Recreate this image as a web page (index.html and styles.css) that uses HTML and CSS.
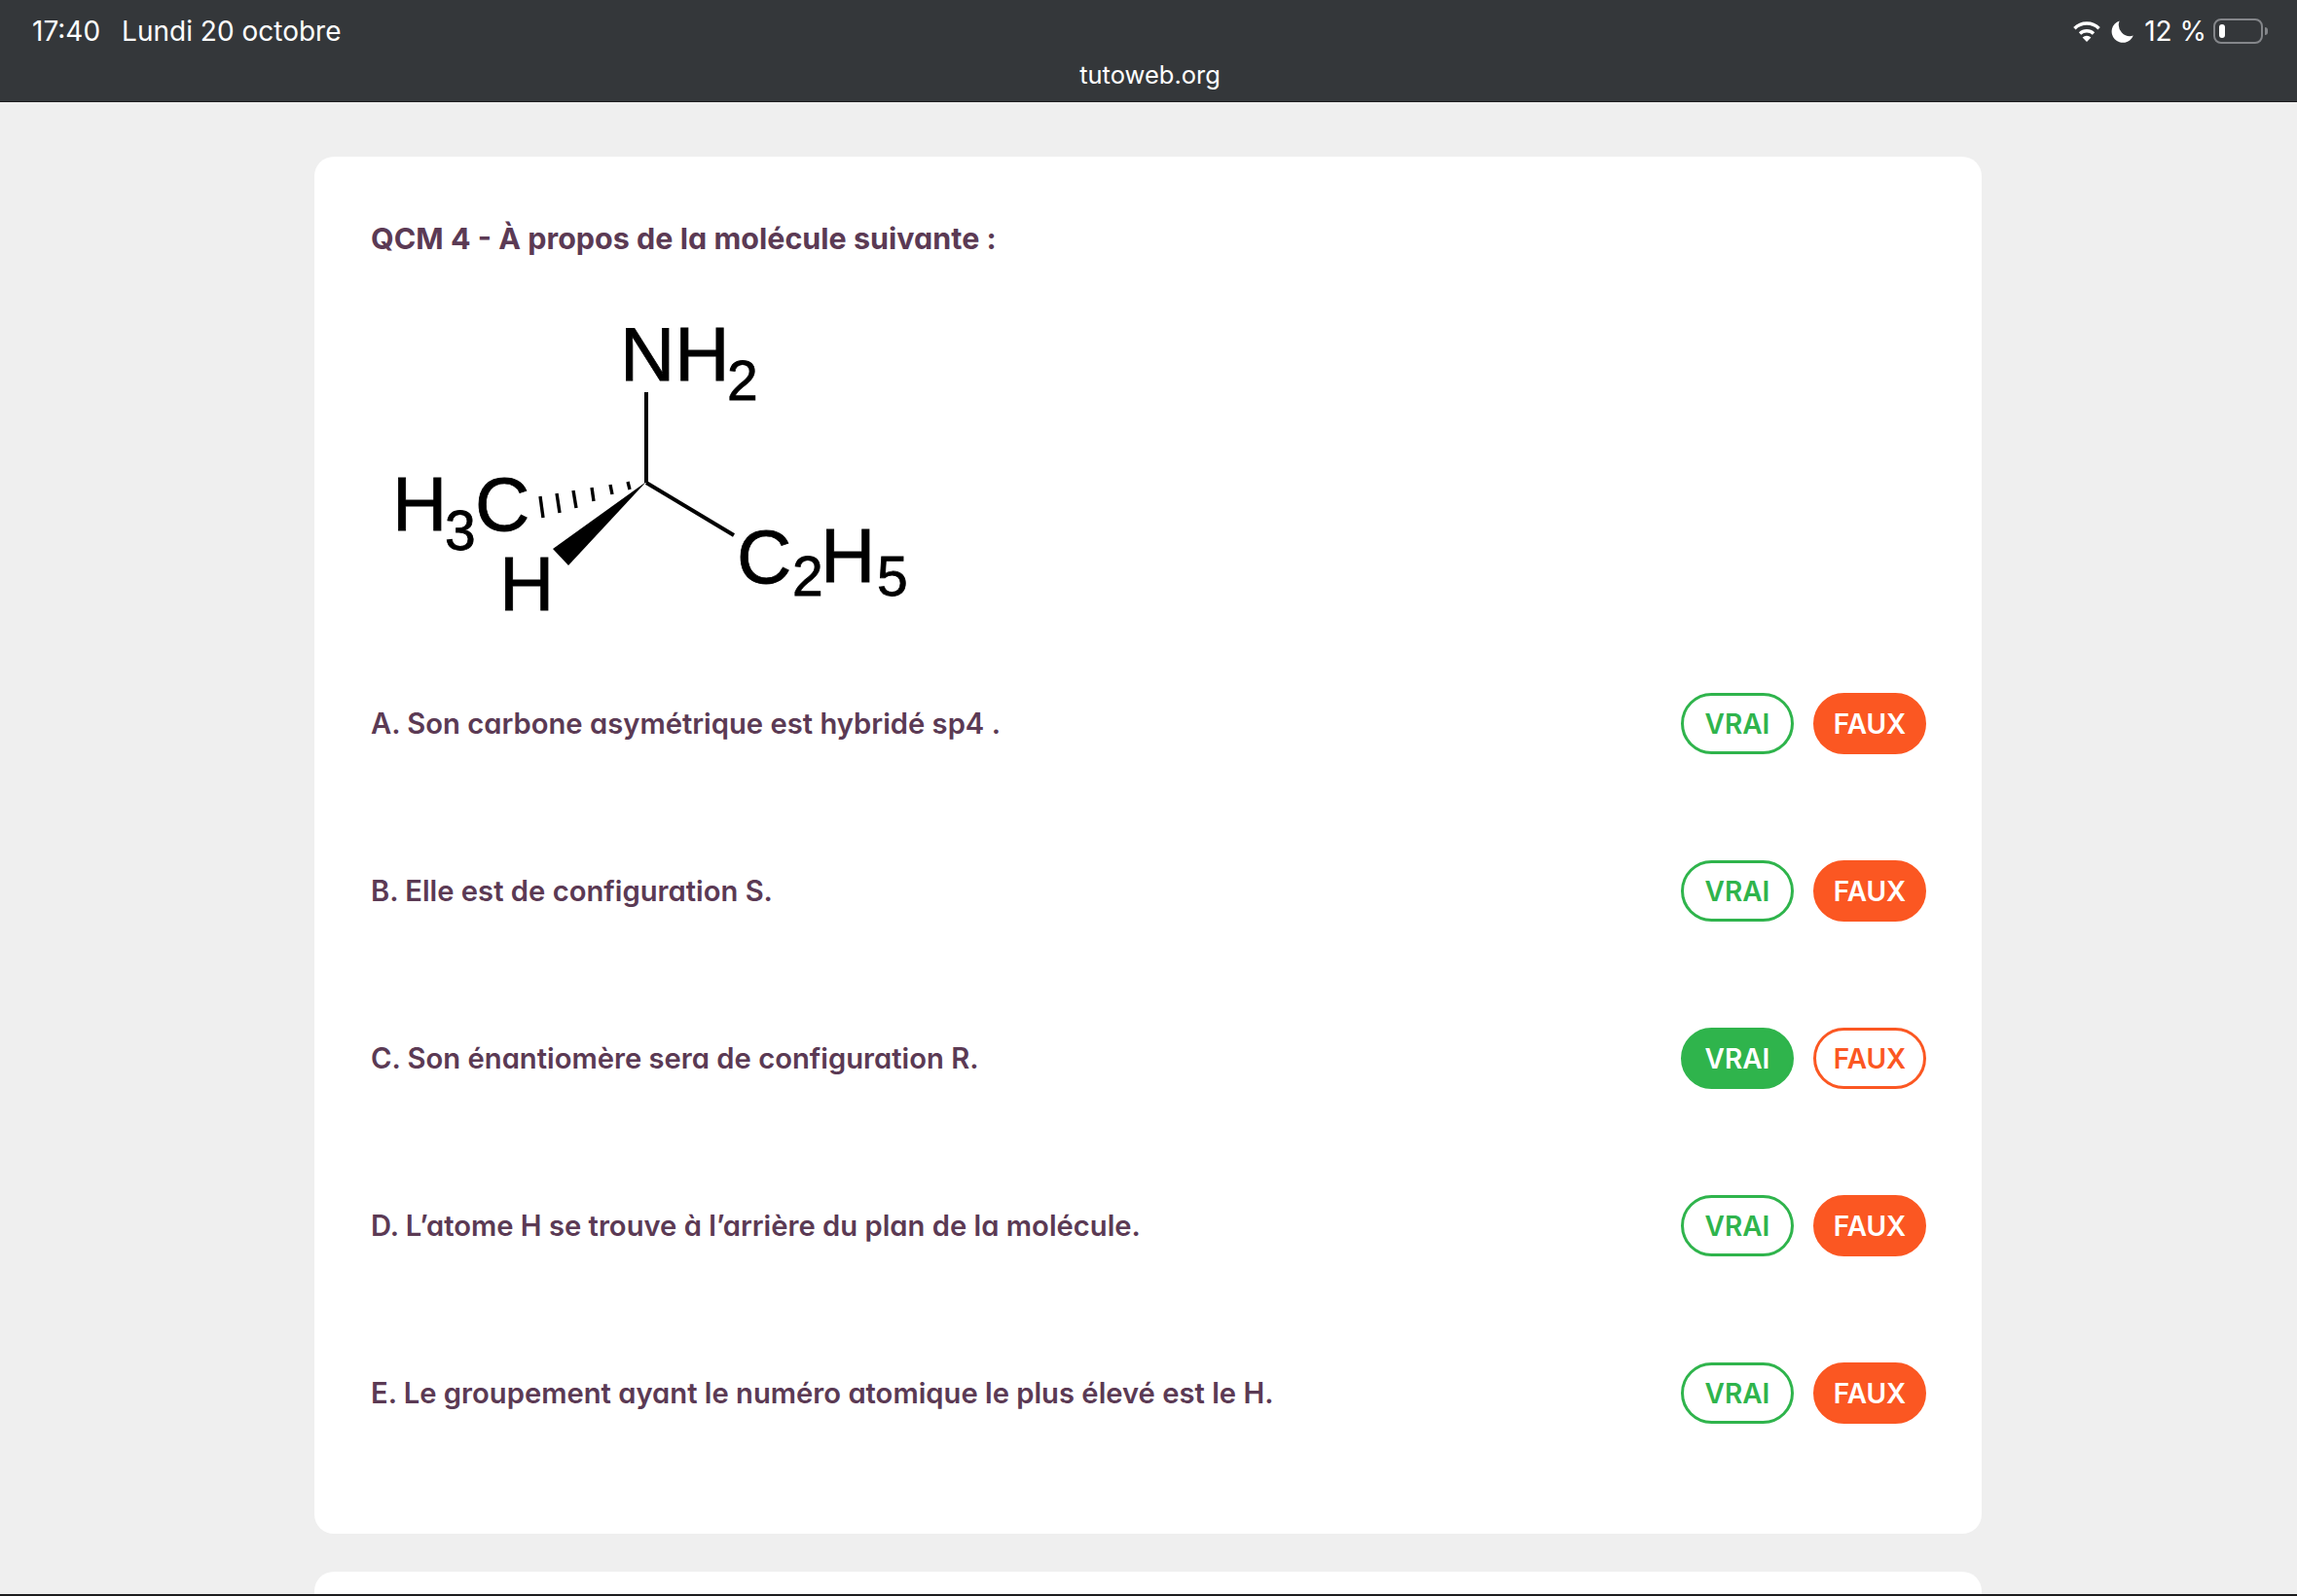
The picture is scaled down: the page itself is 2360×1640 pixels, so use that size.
FILE: index.html
```html
<!DOCTYPE html>
<html lang="fr">
<head>
<meta charset="utf-8">
<title>tutoweb.org</title>
<link rel="stylesheet" href="styles.css">
</head>
<body>
<header class="statusbar">
  <div class="status-top">
    <div class="status-left"><span>17:40</span><span>Lundi 20 octobre</span></div>
    <div class="status-right">
      <svg class="wifi" viewBox="0 0 30 21" aria-hidden="true">
        <path d="M15 21l-4.4-4.6a6.4 6.4 0 0 1 8.8 0z" fill="#fff"/>
        <path d="M8 12.6a10.2 10.2 0 0 1 14 0M2.4 7.2a18 18 0 0 1 25.2 0" fill="none" stroke="#fff" stroke-width="3.4"/>
      </svg>
      <svg class="moon" viewBox="0 0 23 23" aria-hidden="true">
        <path d="M8.6.4A11.5 11.5 0 1 0 22.8 15.6 11.6 11.6 0 0 1 8.6.4z" fill="#fff"/>
      </svg>
      <span class="pct">12 %</span>
      <div class="battery"><div class="battery-level"></div></div>
      <div class="battery-nub"></div>
    </div>
  </div>
  <div class="status-url">tutoweb.org</div>
</header>
<main class="page">
  <section class="card">
    <h2 class="question">QCM 4 - À propos de la molécule suivante :</h2>
    <svg class="molecule" viewBox="381 305 580 350" role="img">
      <g class="bonds">
        <path d="M664 403V496"/>
        <path d="M664 496L754 550"/>
      </g>
      <path class="wedge" d="M664 495L568 564L584 581Z"/>
      <g class="hash">
        <path d="M555 510L558 532"/>
        <path d="M572 507L575 527"/>
        <path d="M589 504L592 522"/>
        <path d="M608 501L610 515"/>
        <path d="M627 498L629 508"/>
        <path d="M645 495L647 503"/>
      </g>
      <text class="atom" x="637" y="391">NH<tspan class="atom-sub" x="747" y="411">2</tspan></text>
      <text class="atom" x="403" y="545">H<tspan class="atom-sub" x="457" y="565">3</tspan><tspan x="488" y="545">C</tspan></text>
      <text class="atom" x="513" y="627">H</text>
      <text class="atom" x="757" y="599">C<tspan class="atom-sub" x="814" y="612">2</tspan><tspan x="843" y="598">H</tspan><tspan class="atom-sub" x="901" y="612">5</tspan></text>
    </svg>
    <div class="rows">
      <div class="row">
        <p class="statement">A. Son carbone asymétrique est hybridé sp4 .</p>
        <div class="choices"><span class="pill vrai">VRAI</span><span class="pill faux on">FAUX</span></div>
      </div>
      <div class="row">
        <p class="statement">B. Elle est de configuration S.</p>
        <div class="choices"><span class="pill vrai">VRAI</span><span class="pill faux on">FAUX</span></div>
      </div>
      <div class="row">
        <p class="statement">C. Son énantiomère sera de configuration R.</p>
        <div class="choices"><span class="pill vrai on">VRAI</span><span class="pill faux">FAUX</span></div>
      </div>
      <div class="row">
        <p class="statement">D. L’atome H se trouve à l’arrière du plan de la molécule.</p>
        <div class="choices"><span class="pill vrai">VRAI</span><span class="pill faux on">FAUX</span></div>
      </div>
      <div class="row">
        <p class="statement">E. Le groupement ayant le numéro atomique le plus élevé est le H.</p>
        <div class="choices"><span class="pill vrai">VRAI</span><span class="pill faux on">FAUX</span></div>
      </div>
    </div>
  </section>
  <section class="card card-next"></section>
</main>
<div class="bottom-line"></div>
</body>
</html>
```
FILE: styles.css
```css
* { box-sizing: border-box; }
html, body { margin: 0; height: 100%; }
body {
  height: 1640px;
  overflow: hidden;
  display: flex;
  flex-direction: column;
  background: #efefef;
  font-family: "Inter", "Liberation Sans", sans-serif;
}
.statusbar {
  flex: none;
  height: 105px;
  background: #34373a;
  border-bottom: 1px solid #1c1c1e;
  color: #fff;
  font-size: 28px;
  padding: 14px 30px 0 33px;
}
.status-top {
  display: flex;
  justify-content: space-between;
  align-items: center;
  height: 36px;
}
.status-left { display: flex; gap: 22px; }
.status-right { display: flex; align-items: center; }
.wifi { width: 30px; height: 21px; margin-right: 10px; }
.moon { width: 23px; height: 23px; margin-right: 11px; }
.pct { margin-right: 7px; }
.battery {
  width: 51px;
  height: 26px;
  border: 2.5px solid #84868a;
  border-radius: 8px;
  padding: 4px;
}
.battery-level { width: 6px; height: 100%; background: #fff; border-radius: 3px; }
.battery-nub {
  width: 3px;
  height: 8px;
  margin-left: 2px;
  background: #84868a;
  border-radius: 0 3px 3px 0;
}
.status-url {
  text-align: center;
  height: 36px;
  line-height: 36px;
  margin-top: 9px;
  font-size: 25.5px;
}
.page {
  flex: 1;
  min-height: 0;
  overflow: hidden;
  padding-top: 56px;
  display: flex;
  flex-direction: column;
  gap: 39px;
}
.card {
  flex: none;
  width: 1713px;
  margin-left: 323px;
  background: #fff;
  border-radius: 20px;
  padding: 64px 57px 113px 58px;
}
.card-next { height: 60px; padding: 0; }
.question {
  margin: 0;
  font-size: 30.5px;
  line-height: 40px;
  font-weight: 700;
  color: #5b3a54;
  font-feature-settings: "cv11" 1;
}
.molecule { display: block; width: 580px; height: 350px; margin-top: 40px; }
.bonds path, .hash path { fill: none; stroke: #000; }
.bonds path { stroke-width: 4; }
.hash path { stroke-width: 3.4; }
.wedge { fill: #000; }
.atom {
  font-family: "Liberation Sans", Arial, sans-serif;
  fill: #000;
  stroke: #000;
  stroke-width: 0.8px;
  font-size: 78px;
}
.atom-sub { font-size: 57px; }
.rows {
  display: flex;
  flex-direction: column;
  gap: 109px;
  margin-top: 57px;
}
.row {
  display: flex;
  justify-content: space-between;
  align-items: center;
  height: 63px;
}
.statement {
  margin: 0;
  font-size: 29.2px;
  font-weight: 600;
  color: #5b3a54;
  font-feature-settings: "cv11" 1;
}
.choices { display: flex; gap: 20px; }
.pill {
  width: 116px;
  height: 63px;
  border-radius: 32px;
  border: 3.5px solid;
  background: #fff;
  display: flex;
  align-items: center;
  justify-content: center;
  font-size: 28px;
  font-weight: 600;
}
.vrai { border-color: #2fb44c; color: #2fb44c; }
.faux { border-color: #fb5722; color: #fb5722; }
.vrai.on { background: #2fb44c; color: #fff; }
.faux.on { background: #fb5722; color: #fff; }
.bottom-line { flex: none; height: 2px; background: #1c1c1e; }
```
